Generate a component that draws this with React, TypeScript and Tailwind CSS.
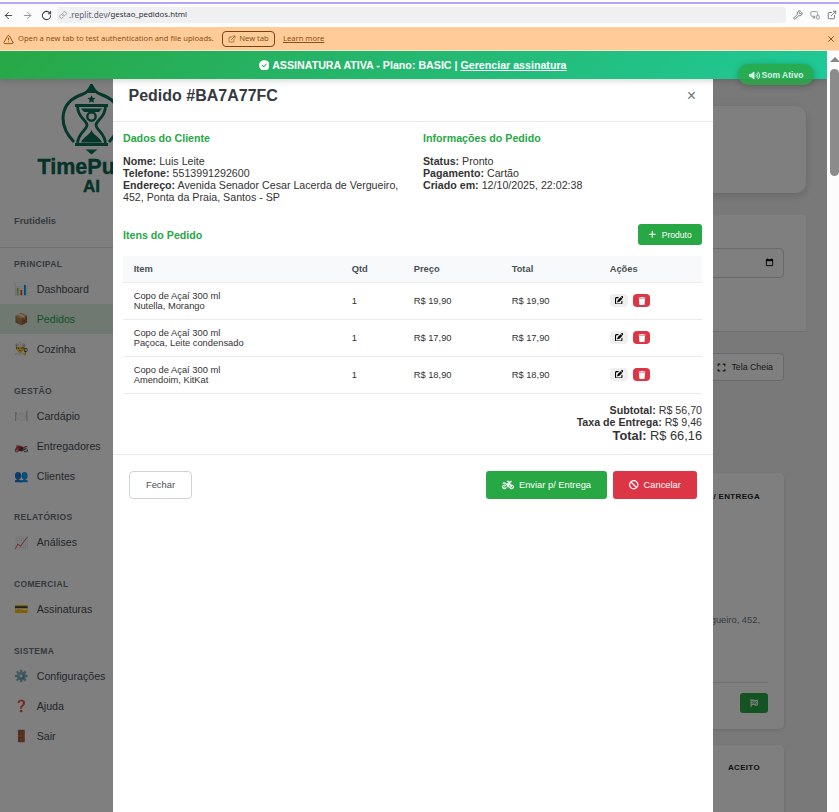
import type { ReactNode } from "react";
import {
  FaBan,
  FaCircleCheck,
  FaExpand,
  FaFlagCheckered,
  FaMotorcycle,
  FaPenToSquare,
  FaPlus,
  FaTrash,
  FaVolumeHigh,
} from "react-icons/fa6";
import {
  ArrowLeft,
  ArrowRight,
  ExternalLink,
  Link,
  MonitorSmartphone,
  RotateCw,
  TriangleAlert,
  Wrench,
  X,
} from "lucide-react";

const navSections = [
  { title: "PRINCIPAL", items: [["📊", "Dashboard"], ["📦", "Pedidos"], ["👨‍🍳", "Cozinha"]] },
  { title: "GESTÃO", items: [["🍽️", "Cardápio"], ["🏍️", "Entregadores"], ["👥", "Clientes"]] },
  { title: "RELATÓRIOS", items: [["📈", "Análises"]] },
  { title: "COMERCIAL", items: [["💳", "Assinaturas"]] },
  { title: "SISTEMA", items: [["⚙️", "Configurações"], ["❓", "Ajuda"], ["🚪", "Sair"]] },
];

const orderItems = [
  { name: "Copo de Açaí 300 ml", extras: "Nutella, Morango", qty: 1, price: "R$ 19,90" },
  { name: "Copo de Açaí 300 ml", extras: "Paçoca, Leite condensado", qty: 1, price: "R$ 17,90" },
  { name: "Copo de Açaí 300 ml", extras: "Amendoim, KitKat", qty: 1, price: "R$ 18,90" },
];

function BrowserBar() {
  return (
    <div className="mt-[2px] flex h-[25px] shrink-0 items-center border-t-2 border-[#b9a6f2] bg-[#fcfcfd] pr-[2px] pb-px pl-[3px] font-['Noto_Sans',sans-serif]">
      <ArrowLeft size={11} strokeWidth={2} className="text-[#3a3f47]" />
      <ArrowRight size={11} strokeWidth={2} className="ml-2 text-[#8b9098]" />
      <RotateCw size={11} strokeWidth={2.2} className="ml-[8px] text-[#3a3f47]" />
      <div className="ml-[5px] flex h-4 w-[729px] items-center rounded-[3px] bg-[#eff0f2] pl-[2px] text-[#5f656d]">
        <Link size={8} className="mr-[2px] text-[#7a8088]" />
        <span className="text-[8.3px] whitespace-nowrap">.replit.dev</span>
        <span className="text-[7.8px] whitespace-nowrap text-[#2d3138]">/gestao_pedidos.html</span>
      </div>
      <div className="flex flex-1 items-center justify-end gap-[7px] text-[#5f656d]">
        <Wrench size={10} />
        <MonitorSmartphone size={10} className="text-[#868b92]" />
        <ExternalLink size={10} />
      </div>
    </div>
  );
}

function AuthNotice() {
  return (
    <div className="flex h-[24px] shrink-0 items-center border-b border-[#f3e3cf] bg-[#ffcc99] pt-px pr-[3px] pl-[3px] font-['Noto_Sans',sans-serif] text-[7.6px] text-[#8a4d14]">
      <TriangleAlert size={11} />
      <span className="ml-[4px] w-[195px] whitespace-nowrap">Open a new tab to test authentication and file uploads.</span>
      <span className="ml-[9px] flex h-4 w-[53px] items-center justify-center gap-[3px] rounded-[4px] border border-[#7a4210] whitespace-nowrap">
        <ExternalLink size={8} />
        New tab
      </span>
      <span className="ml-2 whitespace-nowrap underline">Learn more</span>
      <X size={10} className="ml-auto" strokeWidth={2.2} />
    </div>
  );
}

function Logo() {
  return (
    <svg viewBox="0 0 112 112" className="h-[112px] w-[112px] shrink-0" fill="none" stroke="#0a7055">
      <path d="M37 58C20 40 23 18 45 10.500Q52 8 54.500 1Q57 8 64 10.500C86 18 89 40 72 58" strokeWidth="3" />
      <path d="M54.500 0L50 9H59Z" fill="#0a7055" stroke="none" />
      <path d="M54.500 11.200l1.200 2.600 2.800.3-2.100 1.900.6 2.800-2.500-1.400-2.500 1.400.6-2.800-2.100-1.900 2.800-.3z" fill="#0a7055" stroke="none" />
      <path d="M38 21.500H71M38 60.500H71" strokeWidth="3.2" />
      <path d="M40.500 22C40.500 34 50 36 50 41S40.500 49 40.500 60M68.500 22C68.500 34 59 36 59 41S68.500 49 68.500 60" strokeWidth="2.800" />
      <path d="M44 24.500H65L62 28H47ZM54.500 46C53 51 46 53 44 58.500H65C63 53 56 51 54.500 46Z" fill="#0a7055" stroke="none" />
      <circle cx="54.500" cy="32.500" r="4.200" strokeWidth="2.400" />
      <path d="M48.500 65.500H60.500L54.500 70.500Z" fill="#0a7055" stroke="none" />
      <text x="0.500" y="89.500" fontSize="21.500" fontWeight="700" fill="#0a6650" stroke="#0a6650" strokeWidth="0.4">
        TimePulse
      </text>
      <text x="54.500" y="107.500" textAnchor="middle" fontSize="17" fontWeight="700" fill="#0a6650" stroke="#0a6650" strokeWidth="0.400">
        AI
      </text>
    </svg>
  );
}

function Sidebar() {
  return (
    <aside className="w-[187px] shrink-0 bg-white">
      <div className="flex h-[169px] flex-col border-b border-[#dee2e6] pt-[5px]">
        <div className="pl-[37px]">
          <Logo />
        </div>
        <p className="mt-[18px] pl-[14px] text-[9.33px] leading-[14px] font-bold text-[#6c757d]">Frutidelis</p>
      </div>
      <nav className="pt-[6px]">
        {navSections.map((section) => (
          <div key={section.title} className="pb-[16.7px]">
            <h3 className="h-5 pl-[14px] text-[8.53px] leading-5 font-bold tracking-[0.33px] text-[#6c757d]">{section.title}</h3>
            {section.items.map(([icon, label]) => (
              <div
                key={label}
                className={
                  label === "Pedidos"
                    ? "flex h-[30px] items-center bg-[#e1f0e5] pl-[14px] text-[#28a745]"
                    : "flex h-[30px] items-center pl-[14px] text-[#495057]"
                }
              >
                <span className="w-[15px] text-center text-[11.7px] leading-none whitespace-nowrap">{icon}</span>
                <span className="ml-[7.7px] pt-[0.2px] text-[10.67px]">{label}</span>
              </div>
            ))}
          </div>
        ))}
      </nav>
    </aside>
  );
}

function MainArea() {
  return (
    <main className="flex flex-1 flex-col bg-[#f3f3f3] pt-[27px] pr-[21px] pl-[21px]">
      <div className="h-[87px] shrink-0 rounded-[10px] bg-white shadow-[0_3px_10px_rgba(0,0,0,0.15)]" />
      <div className="mt-[22px] h-[116px] shrink-0 bg-white px-[22px] pt-[33px] shadow-[0_1px_1px_rgba(0,0,0,0.08)]">
        <div className="flex h-[30px] items-center justify-end rounded-[4px] border border-[#ced4da] pr-[9px] pb-px">
          <svg width="9" height="9" viewBox="0 0 10 9" fill="none" stroke="#000">
            <path d="M1.5 1.5h7v6.500h-7z" />
            <path d="M1 2h8" strokeWidth="2" />
            <path d="M2.5 0v2M7.500 0v2" />
          </svg>
        </div>
      </div>
      <div className="mt-[22px] flex justify-end pr-[22px]">
        <div className="flex h-[28px] w-[88px] items-center justify-end gap-[5px] rounded-[4px] border border-[#ced4da] bg-white pt-px pr-[10px] text-[8.8px] text-[#333]">
          <FaExpand size={9} />
          Tela Cheia
        </div>
      </div>
      <div className="mx-[22px] mt-[92px] h-[256px] shrink-0 rounded-[5px] bg-white px-[16px] pt-[17px] shadow-[0_1px_4px_rgba(0,0,0,0.12)]">
        <p className="pr-[8px] text-right text-[8px] leading-[14px] font-bold tracking-[0.33px] text-[#212529]">PRONTO P/ ENTREGA</p>
        <p className="mt-[109px] pr-[8px] text-right text-[9.33px] leading-[14px] text-[#6c757d]">de Vergueiro, 452,</p>
        <div className="mt-[55px] flex justify-end border-t border-[#dee2e6] pt-[10px]">
          <span className="flex h-[20px] w-[28px] items-center justify-center rounded-[3px] bg-[#28a745] text-white">
            <FaFlagCheckered size={8.5} />
          </span>
        </div>
      </div>
      <div className="mx-[22px] mt-[16px] h-[100px] shrink-0 rounded-[5px] bg-white px-[16px] pt-[16px] shadow-[0_1px_4px_rgba(0,0,0,0.12)]">
        <p className="pr-[8px] text-right text-[8px] leading-[14px] font-bold tracking-[0.33px] text-[#212529]">ACEITO</p>
      </div>
    </main>
  );
}

function Field({ label, children }: { label: string; children: ReactNode }) {
  return (
    <p>
      <strong>{label}</strong> {children}
    </p>
  );
}

function OrderModal() {
  const columns = "grid grid-cols-[218px_62px_98px_98px_103px] items-center text-[9.33px]";
  return (
    <div className="flex h-full w-[600px] flex-col bg-white text-[10.67px] leading-3 text-[#333]">
      <header className="flex h-[43px] shrink-0 justify-between border-b border-[#e9ecef] pt-[7px] pr-[17px] pl-[15.5px]">
        <h2 className="text-[16px] leading-5 font-bold text-[#343a40]">Pedido #BA7A77FC</h2>
        <span className="text-[16px] leading-5 text-[#6c757d]">×</span>
      </header>
      <div className="h-[333px] shrink-0 border-b border-[#e9ecef] pt-[10px] pr-[11px] pl-[10px]">
        <div className="grid h-[92px] grid-cols-[284px_279px] gap-x-[16px]">
          <section>
            <h4 className="mb-[11px] font-bold text-[#28a745]">Dados do Cliente</h4>
            <Field label="Nome:">Luis Leite</Field>
            <Field label="Telefone:">5513991292600</Field>
            <Field label="Endereço:">Avenida Senador Cesar Lacerda de Vergueiro, 452, Ponta da Praia, Santos - SP</Field>
          </section>
          <section>
            <h4 className="mb-[11px] font-bold text-[#28a745]">Informações do Pedido</h4>
            <Field label="Status:">Pronto</Field>
            <Field label="Pagamento:">Cartão</Field>
            <Field label="Criado em:">12/10/2025, 22:02:38</Field>
          </section>
        </div>
        <div className="flex h-[21px] items-center justify-between">
          <h4 className="pt-px font-bold text-[#28a745]">Itens do Pedido</h4>
          <button className="flex h-[21px] w-[64px] items-center justify-center gap-[5px] rounded-[3px] bg-[#28a745] text-[8.53px] text-white">
            <FaPlus size={8.5} />
            Produto
          </button>
        </div>
        <div className="mt-[11px]">
          <div className={`${columns} h-[27px] border-b border-[#e9ecef] bg-[#f8f9fa] font-bold text-[#495057]`}>
            {["Item", "Qtd", "Preço", "Total", "Ações"].map((heading) => (
              <span key={heading} className="pl-[10.67px]">{heading}</span>
            ))}
          </div>
          {orderItems.map((item) => (
            <div key={item.extras} className={`${columns} h-[37px] border-b border-[#e9ecef] leading-[10px]`}>
              <span className="pl-[10.67px]">
                {item.name}
                <br />
                {item.extras}
              </span>
              <span className="pl-[10.67px]">{item.qty}</span>
              <span className="pl-[10.67px]">{item.price}</span>
              <span className="pl-[10.67px]">{item.price}</span>
              <span className="flex gap-[5px] pb-[2px] pl-[11px]">
                <button className="flex h-[13px] w-[18px] items-center justify-center rounded-[4px] bg-[#efefef] text-black">
                  <FaPenToSquare size={8.5} />
                </button>
                <button className="flex h-[13px] w-[17px] items-center justify-center rounded-[4px] bg-[#dc3545] pt-px text-white">
                  <FaTrash size={8} />
                </button>
              </span>
            </div>
          ))}
        </div>
        <div className="mt-[10px] text-right">
          <Field label="Subtotal:">R$ 56,70</Field>
          <Field label="Taxa de Entrega:">R$ 9,46</Field>
          <div className="text-[12.8px] leading-[15px]">
            <Field label="Total:">R$ 66,16</Field>
          </div>
        </div>
      </div>
      <footer className="flex gap-[6px] pt-[16px] pr-[16px] pl-[16px] text-[9.33px]">
        <button className="mr-auto h-[28px] w-[63px] rounded-[4px] border border-[#ced4da] bg-white text-[#495057]">Fechar</button>
        <button className="flex h-[28px] w-[121px] items-center justify-center gap-[5px] rounded-[3px] bg-[#28a745] text-white">
          <FaMotorcycle size={12} />
          Enviar p/ Entrega
        </button>
        <button className="flex h-[28px] w-[84px] items-center justify-center gap-[5px] rounded-[3px] bg-[#dc3545] text-white">
          <FaBan size={9.5} />
          Cancelar
        </button>
      </footer>
    </div>
  );
}

export default function App() {
  return (
    <div className="flex h-[812px] w-[839px] flex-col overflow-hidden bg-[#fcfcfd] font-['Liberation_Sans',Arial,sans-serif]">
      <BrowserBar />
      <AuthNotice />
      <div className="flex min-h-0 flex-1">
        <div className="relative flex w-[827px] flex-col overflow-hidden">
          <div className="z-20 flex h-[28px] shrink-0 items-center justify-center bg-linear-135 from-[#28a745] to-[#20c997] pr-[2px] text-[10.67px] font-bold text-white shadow-[0_1px_7px_rgba(0,0,0,0.2)]">
            <FaCircleCheck size={10.67} className="mr-[3px]" />
            <span className="whitespace-pre">ASSINATURA ATIVA - Plano: BASIC | </span>
            <span className="underline">Gerenciar assinatura</span>
          </div>
          <div className="flex min-h-0 flex-1 overflow-hidden">
            <Sidebar />
            <MainArea />
          </div>
          <div className="absolute inset-0 z-10 flex justify-center bg-black/50 pt-[28px] pr-px">
            <OrderModal />
          </div>
          <div className="absolute top-[13px] right-[13px] z-30 flex h-[21px] w-[76px] items-center justify-center gap-[2px] rounded-full bg-[#28a745] pt-px text-[8.53px] font-bold text-white opacity-80 shadow-[0_1px_6px_rgba(0,0,0,0.3)]">
            <FaVolumeHigh size={11} />
            Som Ativo
          </div>
        </div>
        <div className="flex w-[12px] flex-col items-center bg-[#fcfcfc] pt-[6px] pl-[3px]">
          <span className="border-x-[5px] border-b-[5px] border-x-transparent border-b-[#868686]" />
          <span className="mt-[7px] h-[107px] w-[9px] rounded-full bg-[#8b8b8b]" />
        </div>
      </div>
    </div>
  );
}
